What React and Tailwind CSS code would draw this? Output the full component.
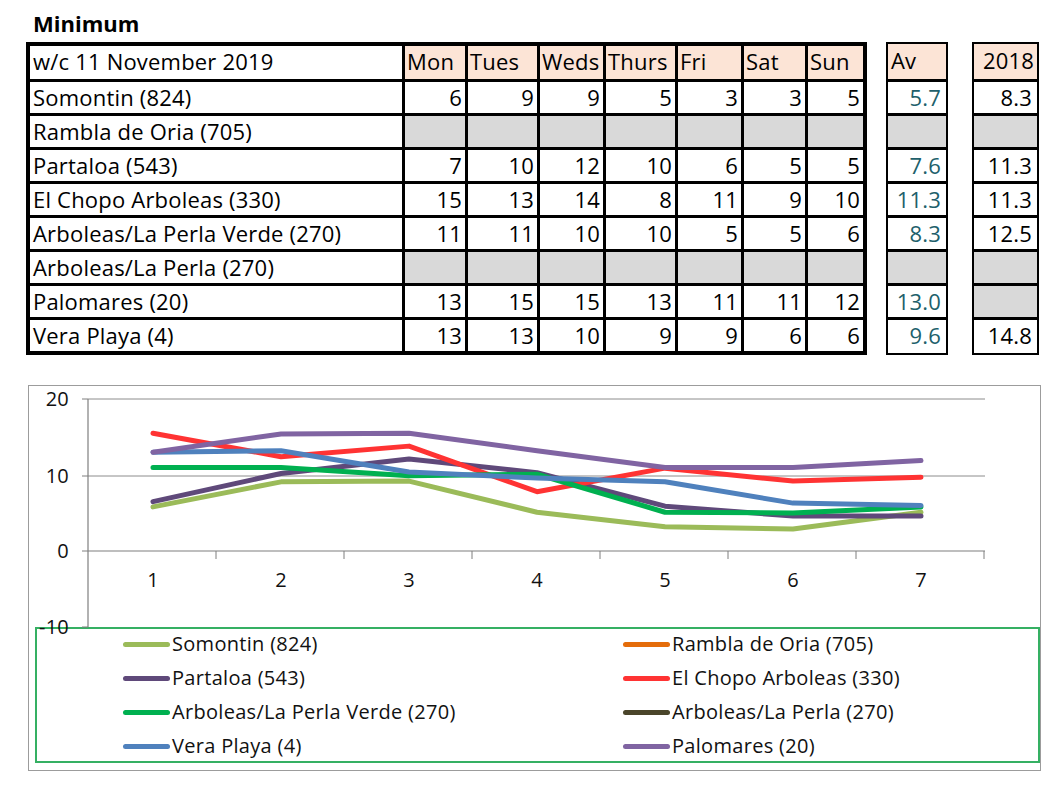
import React from "react";

const font = { fontFamily: '"Open Sans", "Liberation Sans", sans-serif' };

const rows = [
  { name: "Somontin (824)", days: [6, 9, 9, 5, 3, 3, 5], av: "5.7", prev: "8.3" },
  { name: "Rambla de Oria (705)", days: null, av: null, prev: null },
  { name: "Partaloa (543)", days: [7, 10, 12, 10, 6, 5, 5], av: "7.6", prev: "11.3" },
  { name: "El Chopo Arboleas (330)", days: [15, 13, 14, 8, 11, 9, 10], av: "11.3", prev: "11.3" },
  { name: "Arboleas/La Perla Verde (270)", days: [11, 11, 10, 10, 5, 5, 6], av: "8.3", prev: "12.5" },
  { name: "Arboleas/La Perla (270)", days: null, av: null, prev: null },
  { name: "Palomares (20)", days: [13, 15, 15, 13, 11, 11, 12], av: "13.0", prev: null },
  { name: "Vera Playa (4)", days: [13, 13, 10, 9, 9, 6, 6], av: "9.6", prev: "14.8" },
];

const dayNames = ["Mon", "Tues", "Weds", "Thurs", "Fri", "Sat", "Sun"];

const series = [
  { name: "Somontin (824)", color: "#9bbb59", data: [5.8, 9.1, 9.2, 5.1, 3.2, 2.9, 5.1] },
  { name: "Rambla de Oria (705)", color: "#e46c0a", data: null },
  { name: "Partaloa (543)", color: "#5f497a", data: [6.5, 10.2, 12.1, 10.3, 5.9, 4.6, 4.6] },
  { name: "El Chopo Arboleas (330)", color: "#ff3333", data: [15.5, 12.4, 13.8, 7.8, 10.9, 9.2, 9.7] },
  { name: "Arboleas/La Perla Verde (270)", color: "#00b050", data: [11, 11, 9.9, 10.1, 5.1, 5.0, 5.8] },
  { name: "Arboleas/La Perla (270)", color: "#4a452a", data: null },
  { name: "Vera Playa (4)", color: "#4f81bd", data: [13, 13.2, 10.4, 9.6, 9.1, 6.3, 6.0] },
  { name: "Palomares (20)", color: "#8064a2", data: [13, 15.4, 15.5, 13.2, 11, 11, 11.9] },
];

const yv = (v) => 165 - v * 7.6;
const xc = (i) => 124 + 128 * i;

function MainTable() {
  return (
    <div className="grid w-[841px] grid-cols-[372px_60px_69px_63px_69px_63px_61px_55px] grid-rows-[33px_repeat(8,31px)] gap-[3px] border-4 border-black bg-black">
      <div className="bg-white pl-[3px] leading-[31px]">w/c 11 November 2019</div>
      {dayNames.map((d) => (
        <div key={d} className="bg-[#fce4d6] pl-[2px] leading-[31px]">{d}</div>
      ))}
      {rows.map((r) => (
        <React.Fragment key={r.name}>
          <div className="whitespace-nowrap bg-white pl-[3px] leading-[31px]">{r.name}</div>
          {r.days
            ? r.days.map((v, i) => (
                <div key={i} className="bg-white pr-[3px] text-right leading-[31px]">{v}</div>
              ))
            : dayNames.map((d) => <div key={d} className="bg-[#d9d9d9]" />)}
        </React.Fragment>
      ))}
    </div>
  );
}

function SideBox({ title, values, align, color, width }) {
  return (
    <div className={`grid ${width} grid-rows-[35px_repeat(7,31px)_33px] gap-[3px] border-2 border-black bg-black`}>
      <div className={`bg-[#fce4d6] px-[3px] leading-[33px] ${align}`}>{title}</div>
      {values.map((v, i) =>
        v ? (
          <div key={i} className={`bg-white pr-[5px] text-right leading-[31px] ${color}`}>{v}</div>
        ) : (
          <div key={i} className="bg-[#d9d9d9]" />
        )
      )}
    </div>
  );
}

function Chart() {
  const yLabels = [
    { t: "20", y: 13 },
    { t: "10", y: 90 },
    { t: "0", y: 165 },
    { t: "-10", y: 241 },
  ];
  const left = series.filter((_, i) => i % 2 === 0);
  const right = series.filter((_, i) => i % 2 === 1);
  const legendOrder = [];
  for (let i = 0; i < 4; i++) {
    legendOrder.push(left[i], right[i]);
  }
  return (
    <div className="ml-[28px] mt-[30px] h-[386px] w-[1013px] border border-[#9c9c9c]">
      <svg width="1011" height="241" className="block overflow-visible" style={font}>
        <line x1="59" y1="13" x2="956" y2="13" stroke="#8c8c8c" strokeWidth="1" />
        <line x1="59" y1="90" x2="956" y2="90" stroke="#8c8c8c" strokeWidth="1" />
        <line x1="59" y1="165" x2="956" y2="165" stroke="#7f7f7f" strokeWidth="1.2" />
        <line x1="59" y1="13" x2="59" y2="241" stroke="#7f7f7f" strokeWidth="1.2" />
        {yLabels.map((l) => (
          <g key={l.t}>
            <line x1="53" y1={l.y} x2="59" y2={l.y} stroke="#7f7f7f" strokeWidth="1" />
            <text x="40" y={l.y + 7} textAnchor="end" fontSize="20" fill="#111">{l.t}</text>
          </g>
        ))}
        {[1, 2, 3, 4, 5, 6, 7].map((k) => (
          <line key={k} x1={59 + 128 * k} y1="165" x2={59 + 128 * k} y2="173" stroke="#7f7f7f" strokeWidth="1" />
        ))}
        {[0, 1, 2, 3, 4, 5, 6].map((i) => (
          <text key={i} x={xc(i)} y="201" textAnchor="middle" fontSize="20" fill="#111">{i + 1}</text>
        ))}
        {series
          .filter((s) => s.data)
          .map((s) => (
            <polyline
              key={s.name}
              points={s.data.map((v, i) => `${xc(i)},${yv(v)}`).join(" ")}
              fill="none"
              stroke={s.color}
              strokeWidth="5"
              strokeLinejoin="round"
              strokeLinecap="round"
            />
          ))}
      </svg>
      <div className="ml-[6px] grid h-[136px] w-[1005px] grid-cols-[500px_1fr] grid-rows-[repeat(4,34px)] border-2 border-[#35b063] pl-[86px] text-[20px] tracking-[0.3px]">
        {legendOrder.map((s) => (
          <div key={s.name} className="flex items-center whitespace-nowrap pb-[4px]">
            <span className="h-[5px] w-[47px] rounded-full" style={{ backgroundColor: s.color }} />
            <span className="ml-[2px] text-[#111]">{s.name}</span>
          </div>
        ))}
      </div>
    </div>
  );
}

export default function App() {
  return (
    <div className="min-h-[800px] w-[1049px] bg-white text-[22px] tracking-[0.2px] text-black" style={font}>
      <div className="pl-[33px] pt-[8px] text-[22px] font-bold leading-[30px] tracking-normal">Minimum</div>
      <div className="ml-[26px] mt-[4px] flex">
        <MainTable />
        <div className="ml-[19px]">
          <SideBox title="Av" values={rows.map((r) => r.av)} align="text-left" color="text-[#215f6b]" width="w-[62px]" />
        </div>
        <div className="ml-[24px]">
          <SideBox title="2018" values={rows.map((r) => r.prev)} align="text-right" color="text-black" width="w-[67px]" />
        </div>
      </div>
      <Chart />
    </div>
  );
}
